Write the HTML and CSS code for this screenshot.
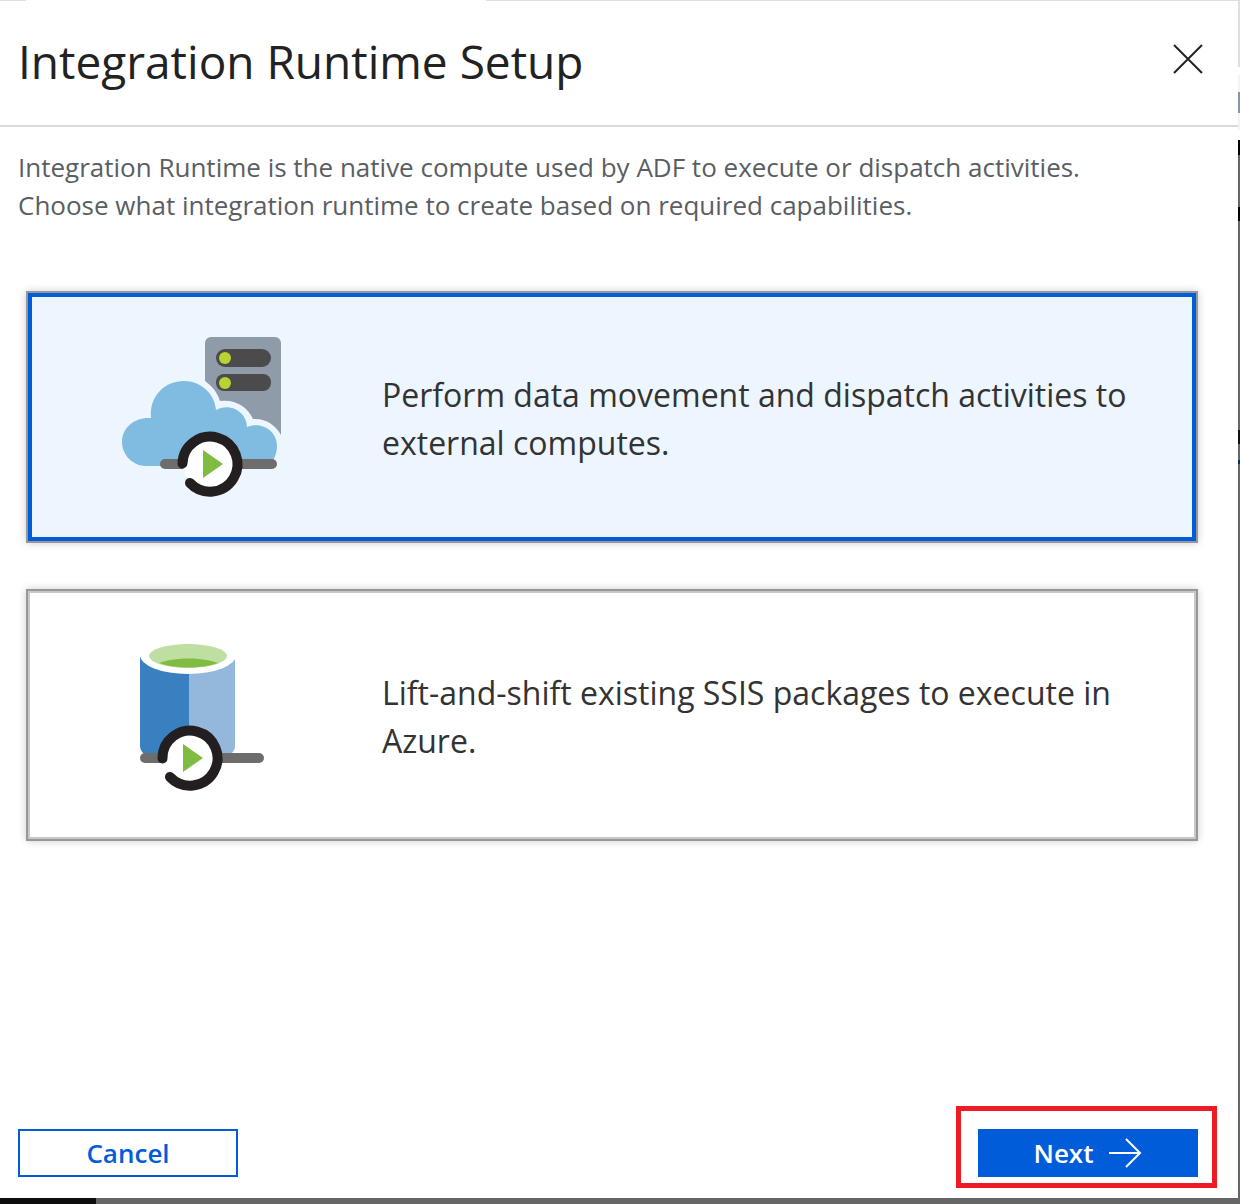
FILE: index.html
```html
<!DOCTYPE html>
<html lang="en">
<head>
<meta charset="utf-8">
<title>Integration Runtime Setup</title>
<link rel="stylesheet" href="styles.css">
</head>
<body>
<main class="panel">
  <header class="header">
    <h1 class="title">Integration Runtime Setup</h1>
    <button class="close" type="button" aria-label="Close">
      <svg width="30" height="30" viewBox="0 0 30 30" fill="none" stroke="#222" stroke-width="2"><path d="M1 1 29 29M29 1 1 29"/></svg>
    </button>
  </header>
  <p class="intro">Integration Runtime is the native compute used by ADF to execute or dispatch activities. Choose what integration runtime to create based on required capabilities.</p>
  <div class="options">
    <button class="option option-selected" type="button" aria-pressed="true">
      <span class="art">
        <svg width="190" height="185" viewBox="0 0 190 185" aria-hidden="true">
          <path fill="#8f9ba8" d="M95 18a6 6 0 0 1 6-6h64a6 6 0 0 1 6 6v92c-5-10-16-17-28-16-5-12-18-20-33-18-3-9-8-15-15-20z"/>
          <rect x="106" y="24" width="55" height="18" rx="9" fill="#4b4b4b"/>
          <rect x="106" y="49" width="55" height="17" rx="8" fill="#4b4b4b"/>
          <circle cx="115" cy="33" r="6" fill="#b8d432"/>
          <circle cx="115" cy="58" r="6" fill="#b8d432"/>
          <path fill="#80bbe1" d="M36 141c-13 0-24-11-24-24 0-14 12-25 29-24C39 72 54 56 74 56c17 0 31 13 32 29 14-8 31 2 31 17 16-6 30 5 30 19 0 9-4 16-10 20z"/>
          <path stroke="#6d6d6d" stroke-width="10" stroke-linecap="round" d="M55 139h107"/>
          <circle cx="100" cy="139" r="27" fill="#fff"/>
          <path fill="none" stroke="#231f20" stroke-width="10" stroke-linecap="round" d="M72.500 138.500A27.500 27.500 0 1 1 80 158"/>
          <path fill="#80bb42" d="m93 125 20 14-20 14z"/>
        </svg>
      </span>
      <span class="option-text">Perform data movement and dispatch activities to external computes.</span>
    </button>
    <button class="option" type="button" aria-pressed="false">
      <span class="art">
        <svg width="190" height="185" viewBox="0 0 190 185" aria-hidden="true">
          <path fill="#3980c0" d="M30 34h50v102H45c-9-2-15-7-15-13z"/>
          <path fill="#93b8dc" d="M79 34h46v89c0 6-6 11-15 13H79z"/>
          <ellipse cx="78" cy="32" rx="48" ry="19" fill="#fff"/>
          <ellipse cx="78" cy="33" rx="39" ry="12" fill="#bfdea1"/>
          <path fill="#80bb42" d="M49 40c16-6 43-6 59 0-16 6-43 6-59 0z"/>
          <path stroke="#6d6d6d" stroke-width="10" stroke-linecap="round" d="M35 135h114"/>
          <circle cx="80" cy="135" r="27" fill="#fff"/>
          <path fill="none" stroke="#231f20" stroke-width="10" stroke-linecap="round" d="M52.500 135.500A27.500 27.500 0 1 1 60 154"/>
          <path fill="#80bb42" d="m73 121 20 14-20 14z"/>
        </svg>
      </span>
      <span class="option-text">Lift-and-shift existing SSIS packages to execute in Azure.</span>
    </button>
  </div>
  <footer class="footer">
    <button class="btn" type="button">Cancel</button>
    <div class="highlight">
      <button class="btn btn-primary" type="button">Next
        <svg width="33" height="30" viewBox="0 0 33 30" fill="none" stroke="#fff" stroke-width="2" aria-hidden="true"><path d="M0 15h31M17 1l14 14-14 14"/></svg>
      </button>
    </div>
  </footer>
</main>
</body>
</html>
```
FILE: styles.css
```css
* { box-sizing: border-box; }

/* The dimmed page behind the panel shows along the right and bottom edges. */
body {
  margin: 0;
  min-height: 100vh;
  display: flex;
  padding: 0 2px 6px 0;
  font-family: "Segoe UI", "Open Sans", "Noto Sans", sans-serif;
  background:
    linear-gradient(#0d0d0d, #0d0d0d) left bottom / 96px 6px no-repeat,
    linear-gradient(#dcdfe5 67px, #fff 67px 75px, #f3f3f3 75px 92px, #8496ab 92px 113px, #f3f3f3 113px 130px, #fff 130px 140px, #000 140px 155px, #666 155px 207px, #000 207px 221px, #666 221px 430px, #111 430px 444px, #666 444px 460px, #003070 460px 464px, #666 464px);
}

.panel {
  flex: 1;
  display: flex;
  flex-direction: column;
  background: linear-gradient(90deg, #dcdfe5 26px, #fff 26px 486px, #dcdfe5 486px) top / 100% 1px no-repeat #fff;
}

.header {
  display: flex;
  justify-content: space-between;
  align-items: center;
  height: 127px;
  padding: 0 35px 8px 18px;
  border-bottom: 2px solid #dadada;
}

.title {
  margin: 0;
  padding-top: 4px;
  font-size: 46px;
  font-weight: 400;
  line-height: 64px;
  color: #222;
}

button {
  font-family: inherit;
  cursor: pointer;
}

.close {
  display: flex;
  padding: 0;
  border: 0;
  background: none;
}

.intro {
  margin: 0;
  padding: 21px 60px 0 18px;
  max-width: 1180px;
  font-size: 26px;
  line-height: 38px;
  color: #5a5e63;
}

.options {
  display: flex;
  flex-direction: column;
  gap: 46px;
  padding: 67px 40px 40px 26px;
}

.option {
  display: flex;
  align-items: center;
  min-height: 252px;
  padding: 0 48px 0 82px;
  border: 2px solid #979797;
  background: #fff;
  box-shadow: inset 0 0 0 2px #c8c8c8, 0 0 8px rgba(0, 0, 0, .2);
  text-align: left;
}

.option-selected {
  background: #edf5ff;
  box-shadow: inset 0 0 0 4px #015cda, 0 0 8px rgba(0, 0, 0, .2);
}

.art {
  flex: none;
  display: flex;
  width: 272px;
}

.option-text {
  padding-top: 4px;
  font-size: 32px;
  line-height: 48px;
  color: #333;
}

.footer {
  display: flex;
  justify-content: space-between;
  align-items: flex-end;
  margin-top: auto;
  padding: 0 21px 10px 18px;
}

.footer > .btn {
  margin-bottom: 11px;
}

.btn {
  display: flex;
  align-items: center;
  justify-content: center;
  gap: 16px;
  width: 220px;
  height: 48px;
  padding: 0;
  border: 2px solid #015cda;
  background: #fff;
  color: #015cda;
  font-size: 26px;
  font-weight: 600;
}

.btn-primary {
  background: #015cda;
  color: #fff;
}

.highlight {
  padding: 18px 14px 6px 17px;
  border: 5px solid #ed1c24;
}
```
